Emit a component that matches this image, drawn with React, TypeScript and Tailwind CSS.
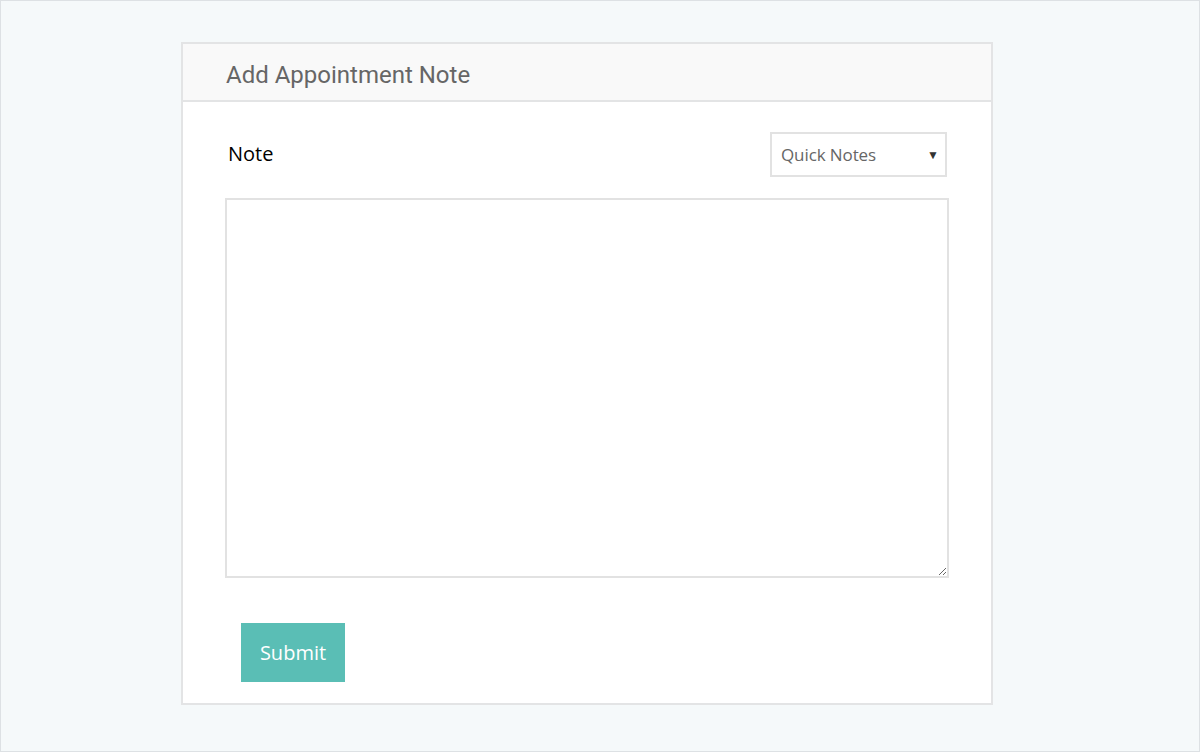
import React from "react";

export default function App() {
  return (
    <div className="w-[1200px] h-[752px] border border-[#dde1e4] bg-[#f5f9fa] pt-[41px] pl-[180px]">
      <div className="w-[812px] border-2 border-[#e3e4e5] bg-white">
        <div className="h-[58px] bg-[#f9f9f9] border-b-2 border-[#e3e4e5] flex items-center pl-[43px] pt-[6px]">
          <h1 className="text-[24px] text-[#666666] font-[Roboto,sans-serif] font-normal leading-none">
            Add Appointment Note
          </h1>
        </div>
        <div className="px-[42px] pt-[30px] pb-[21px]">
          <div className="flex items-center justify-between">
            <label className="ml-[3px] text-[20px] text-black font-['Open_Sans',sans-serif] leading-none pb-[1px]">
              Note
            </label>
            <div className="mr-[2px] w-[177px] h-[45px] border-2 border-[#e2e2e2] flex items-center justify-between pl-[9px] pr-[6px] font-['Open_Sans',sans-serif]">
              <span className="text-[17px] text-[#666666] tracking-[-0.1px]">Quick Notes</span>
              <span className="text-[12px] text-[#333333]">▼</span>
            </div>
          </div>
          <textarea className="mt-[21px] block w-[724px] h-[380px] border-2 border-[#e2e2e2] outline-none resize" />
          <button className="mt-[45px] ml-[16px] w-[104px] h-[59px] bg-[#5abeb5] text-white text-[20px] font-['Open_Sans',sans-serif]">
            Submit
          </button>
        </div>
      </div>
    </div>
  );
}
